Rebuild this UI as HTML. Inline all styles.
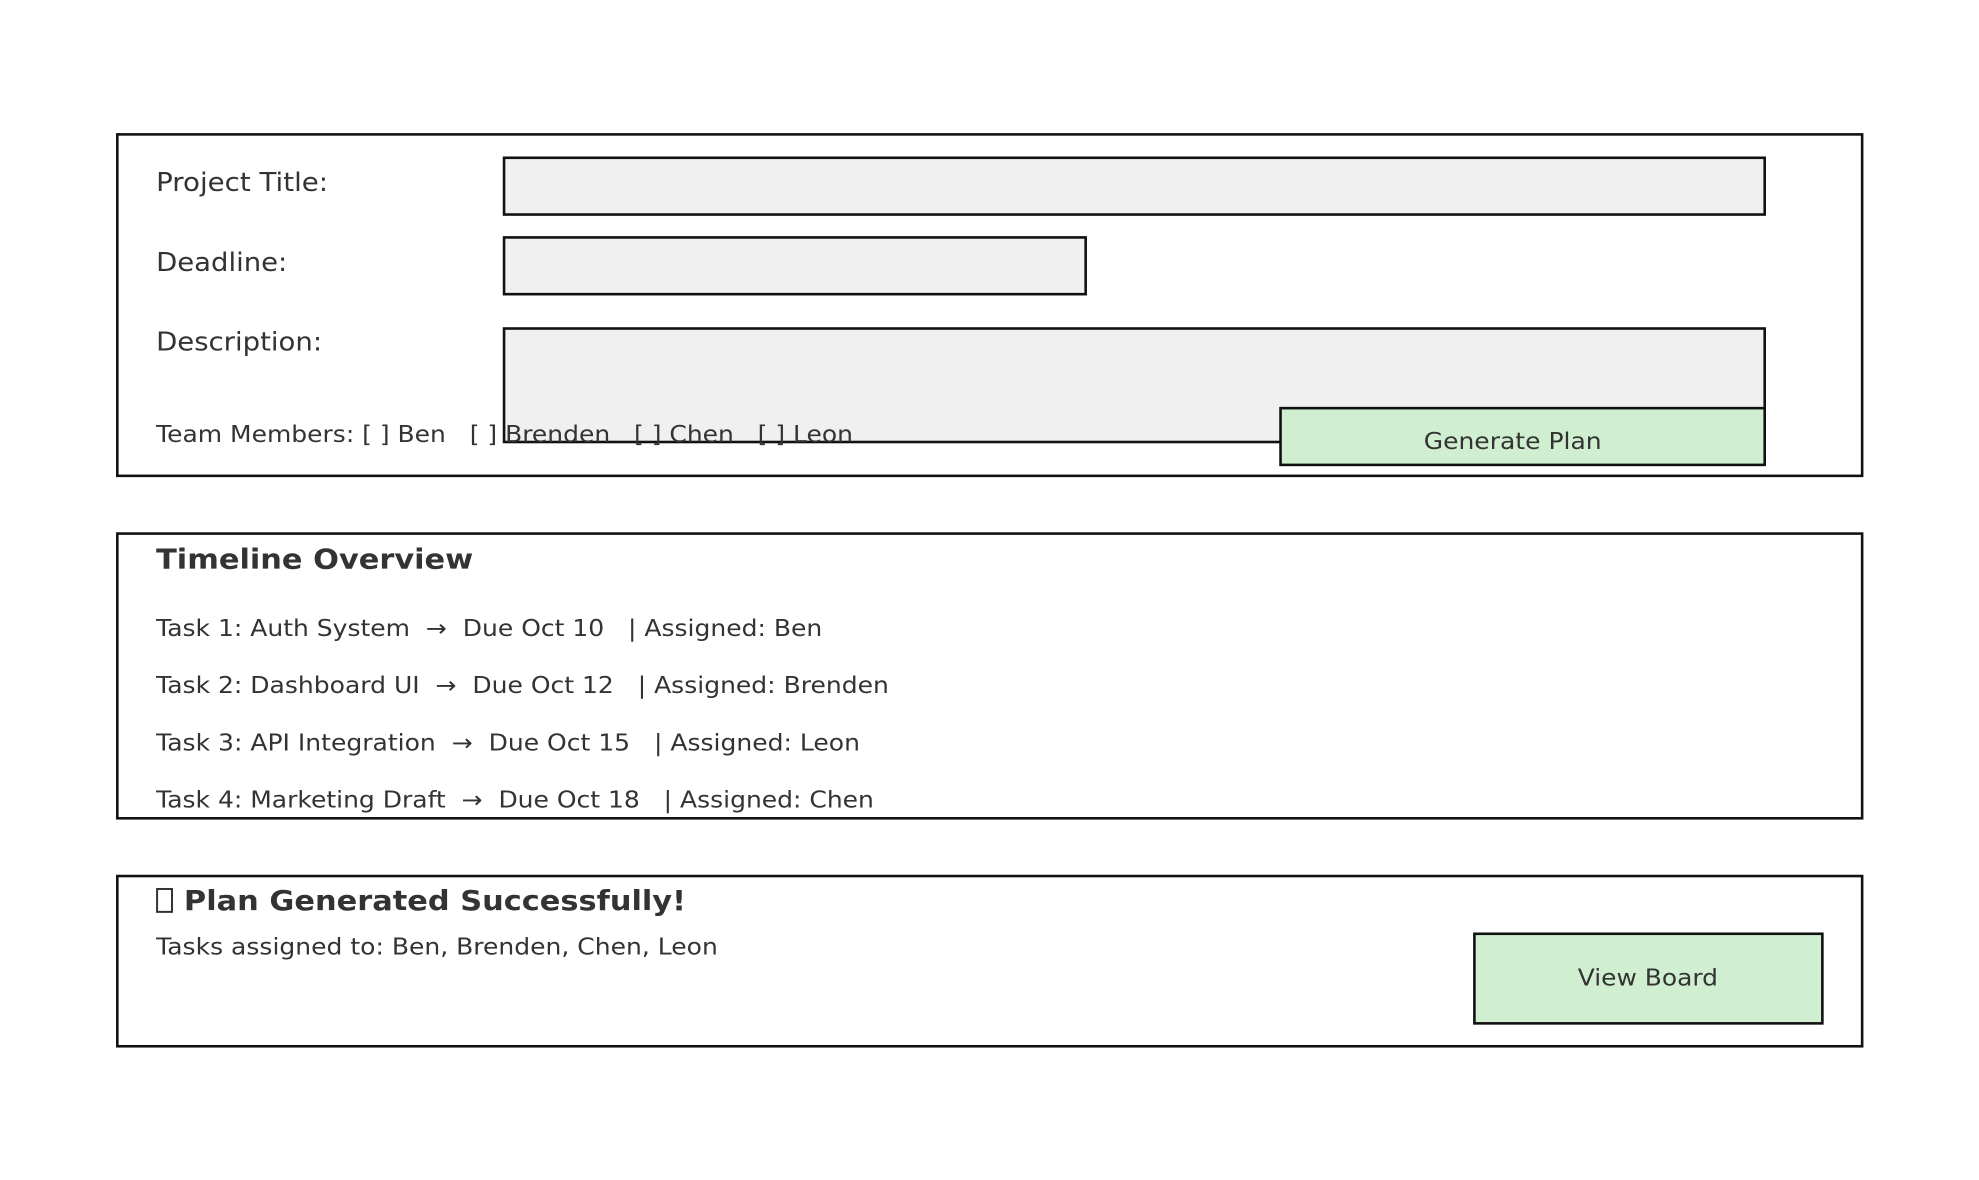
<!DOCTYPE html>
<html><head><meta charset="utf-8"><style>
html,body{margin:0;padding:0;background:#fff;width:1979px;height:1180px;overflow:hidden}
svg{display:block}
text{font-family:"DejaVu Sans","Liberation Sans",sans-serif;fill:#333}
</style></head><body>
<svg width="1979" height="1180" viewBox="0 0 1979 1180" xmlns="http://www.w3.org/2000/svg">
<g transform="scale(0.9942,0.9955)">
<g fill="none" stroke="#111" stroke-width="2.6">
<rect x="118" y="135" width="1755" height="343"/>
<rect x="507" y="158.5" width="1268" height="57" fill="#f0f0f0"/>
<rect x="507" y="238.5" width="585" height="57" fill="#f0f0f0"/>
<rect x="507" y="330" width="1268" height="114" fill="#f0f0f0"/>
<rect x="1288" y="410" width="487" height="57" fill="#d0efd0"/>
<rect x="118" y="536" width="1755" height="286"/>
<rect x="118" y="880" width="1755" height="171"/>
<rect x="1483" y="938" width="350" height="90" fill="#d0efd0"/>
<rect x="158" y="893" width="15" height="23" stroke="#333" stroke-width="2"/>
</g>
<text x="157" y="192" font-size="26" textLength="173" lengthAdjust="spacingAndGlyphs">Project Title:</text>
<text x="157" y="272" font-size="26" textLength="132" lengthAdjust="spacingAndGlyphs">Deadline:</text>
<text x="157" y="352" font-size="26" textLength="167" lengthAdjust="spacingAndGlyphs">Description:</text>
<text x="157" y="444" font-size="23" textLength="701" lengthAdjust="spacingAndGlyphs" xml:space="preserve">Team Members: [ ] Ben   [ ] Brenden   [ ] Chen   [ ] Leon</text>
<text x="1432" y="451" font-size="23" textLength="179" lengthAdjust="spacingAndGlyphs">Generate Plan</text>
<text x="157" y="571" font-size="28" font-weight="bold" textLength="319" lengthAdjust="spacingAndGlyphs">Timeline Overview</text>
<text x="157" y="639" font-size="23" textLength="670" lengthAdjust="spacingAndGlyphs" xml:space="preserve">Task 1: Auth System  →  Due Oct 10   | Assigned: Ben</text>
<text x="157" y="696" font-size="23" textLength="737" lengthAdjust="spacingAndGlyphs" xml:space="preserve">Task 2: Dashboard UI  →  Due Oct 12   | Assigned: Brenden</text>
<text x="157" y="754" font-size="23" textLength="708" lengthAdjust="spacingAndGlyphs" xml:space="preserve">Task 3: API Integration  →  Due Oct 15   | Assigned: Leon</text>
<text x="157" y="811" font-size="23" textLength="722" lengthAdjust="spacingAndGlyphs" xml:space="preserve">Task 4: Marketing Draft  →  Due Oct 18   | Assigned: Chen</text>
<text x="185" y="914" font-size="28" font-weight="bold" textLength="505" lengthAdjust="spacingAndGlyphs">Plan Generated Successfully!</text>
<text x="157" y="959" font-size="23" textLength="565" lengthAdjust="spacingAndGlyphs">Tasks assigned to: Ben, Brenden, Chen, Leon</text>
<text x="1587" y="990" font-size="23" textLength="141" lengthAdjust="spacingAndGlyphs">View Board</text>
</g>
</svg>
</body></html>
